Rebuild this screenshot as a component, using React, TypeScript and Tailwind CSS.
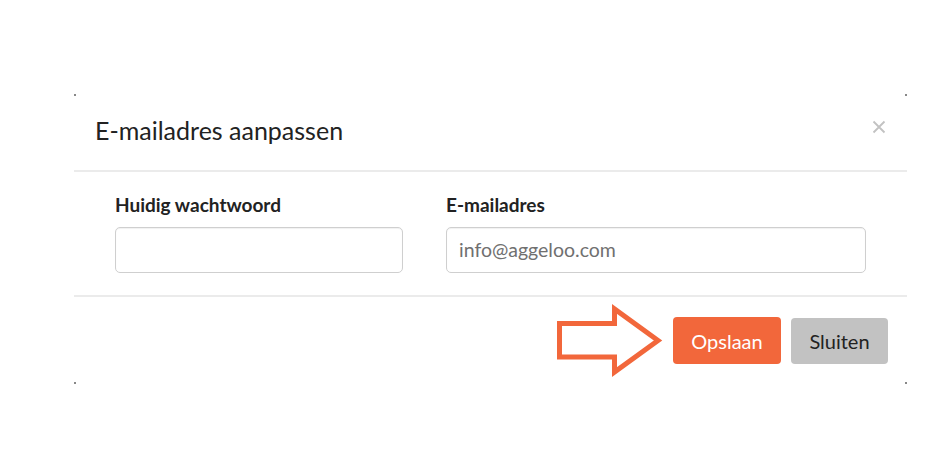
import React from "react";

export default function App() {
  return (
    <div className="w-[950px] h-[475px] bg-white" style={{ fontFamily: "Lato, 'Noto Sans', sans-serif" }}>
      <div className="pt-[94px] pl-[74px]">
        <div className="relative w-[833px] bg-white">
          <span className="absolute left-0 top-0 w-[2px] h-[2px] bg-[#888]" />
          <span className="absolute right-0 top-0 w-[2px] h-[2px] bg-[#888]" />
          <span className="absolute left-0 bottom-0 w-[2px] h-[2px] bg-[#888]" />
          <span className="absolute right-0 bottom-0 w-[2px] h-[2px] bg-[#888]" />

          <div className="flex items-center justify-between pl-[21px] pr-[21px] pt-[24px] pb-[28px] border-b-2 border-[#ebebeb]">
            <h2 className="text-[25px] leading-[24px] text-[#222] font-normal">E-mailadres aanpassen</h2>
            <svg width="14" height="14" viewBox="0 0 14 14" className="-mt-[6px]">
              <path d="M1.5 1.5 L12.5 12.5 M12.5 1.5 L1.5 12.5" stroke="#c2c2c2" strokeWidth="1.8" />
            </svg>
          </div>

          <div className="flex gap-[43px] pl-[41px] pt-[24px] pb-[22px] border-b-2 border-[#ebebeb]">
            <div className="w-[288px] flex flex-col gap-[13px]">
              <label className="text-[19px] leading-[18px] font-bold text-[#222]">Huidig wachtwoord</label>
              <div className="h-[46px] rounded-[5px] border border-[#cfcfcf] shadow-[inset_0_1px_1px_rgba(0,0,0,0.06)]" />
            </div>
            <div className="w-[420px] flex flex-col gap-[13px]">
              <label className="text-[19px] leading-[18px] font-bold text-[#222]">E-mailadres</label>
              <div className="h-[46px] rounded-[5px] border border-[#cfcfcf] shadow-[inset_0_1px_1px_rgba(0,0,0,0.06)] flex items-center pl-[12px] text-[19.5px] text-[#707070]">
                info@aggeloo.com
              </div>
            </div>
          </div>

          <div className="flex items-center justify-end pt-[20px] pb-[20px] pr-[19px]">
            <svg width="110" height="78" viewBox="0 0 110 78" className="mr-[7px] -my-[20px]">
              <path
                d="M3.5 21.5 L58.5 21.5 L58.5 7 L102 38.5 L58.5 70 L58.5 55 L3.5 55 Z"
                fill="white"
                stroke="#f2673b"
                strokeWidth="5"
                strokeLinejoin="miter"
              />
            </svg>
            <button className="h-[47px] w-[108px] rounded-[4px] bg-[#f2673b] text-white text-[20px] leading-none">
              Opslaan
            </button>
            <button className="ml-[10px] h-[46px] w-[97px] rounded-[4px] bg-[#c2c2c2] text-[#222] text-[20px] leading-none">
              Sluiten
            </button>
          </div>
        </div>
      </div>
    </div>
  );
}
